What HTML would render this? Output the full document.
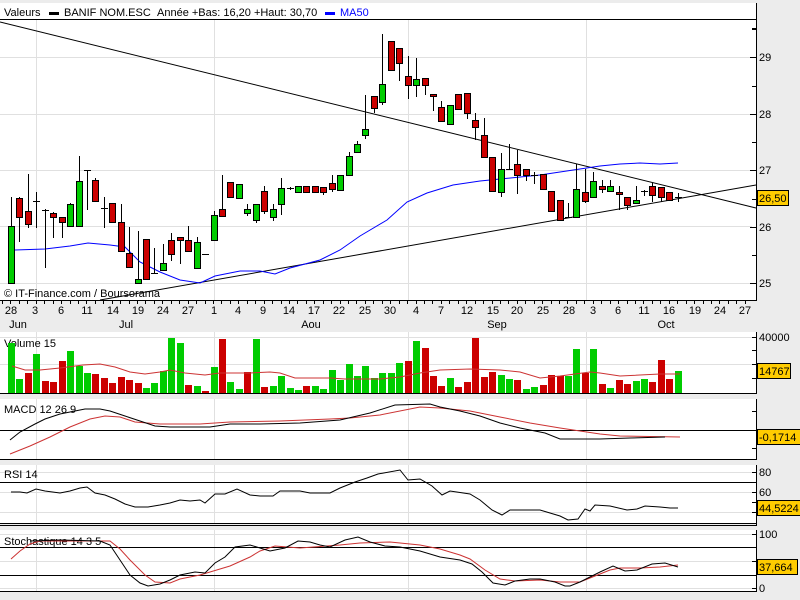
<!DOCTYPE html>
<html><head><meta charset="utf-8">
<style>
html,body{margin:0;padding:0;background:#ececec;width:800px;height:600px;overflow:hidden}
svg{display:block}
text{font-family:"Liberation Sans",Arial,sans-serif;font-size:11px;fill:#000}
</style></head>
<body>
<svg id="s" width="800" height="600" xmlns="http://www.w3.org/2000/svg" shape-rendering="crispEdges">
<rect x="0" y="0" width="800" height="600" fill="#ececec"/>
<!-- panels -->
<rect x="0" y="3" width="756" height="297" fill="#fff"/>
<rect x="0" y="332" width="756" height="61" fill="#fff"/>
<rect x="0" y="399" width="756" height="60" fill="#fff"/>
<rect x="0" y="465" width="756" height="59" fill="#fff"/>
<rect x="0" y="530" width="756" height="61" fill="#fff"/>
<g id="grid" stroke="#e0e0e0" stroke-width="1"></g>
<g id="main"></g>
<!-- header -->
<text x="4" y="16">Valeurs</text>
<rect x="49" y="12" width="10" height="3" fill="#000"/>
<text x="64" y="16">BANIF NOM.ESC</text>
<text x="157" y="16">Année +Bas: 16,20 +Haut: 30,70</text>
<rect x="325" y="12" width="10" height="3" fill="#0000ff"/>
<text x="340" y="16" style="fill:#0000ff">MA50</text>
<line x1="0" y1="19.5" x2="756" y2="19.5" stroke="#000"/>
<text x="4" y="297" style="font-size:11px">© IT-Finance.com / Boursorama</text>
<!-- titles -->
<text x="4" y="347">Volume 15</text>
<text x="4" y="413">MACD 12 26 9</text>
<text x="4" y="478">RSI 14</text>
<text x="4" y="545">Stochastique 14 3 5</text>
<!-- right labels -->
<g id="rl"></g>
</svg>
<script>
var NS="http://www.w3.org/2000/svg",s=document.getElementById('s');
function el(t,a,p){var e=document.createElementNS(NS,t);for(var k in a)e.setAttribute(k,a[k]);(p||s).appendChild(e);return e;}
function txt(x,y,t,a){var e=el('text',Object.assign({x:x,y:y},a||{}));e.textContent=t;return e;}
function pl(pts,c,w){el('polyline',{points:pts.map(function(p){return p.join(',')}).join(' '),fill:'none',stroke:c,'stroke-width':w||1,'shape-rendering':'auto'});}
var g=document.getElementById('grid');
// horizontal grids main
[57,114,170,226,283].forEach(function(y){el('line',{x1:0,y1:y+.5,x2:752,y2:y+.5},g);});
[337,364].forEach(function(y){el('line',{x1:0,y1:y+.5,x2:752,y2:y+.5},g);});
[472,492,512].forEach(function(y){el('line',{x1:0,y1:y+.5,x2:752,y2:y+.5},g);});
[534,561,588].forEach(function(y){el('line',{x1:0,y1:y+.5,x2:752,y2:y+.5},g);});
[[20,300],[332,393],[399,459],[465,523],[530,591]].forEach(function(r){[36,214,408,586].forEach(function(x){el('line',{x1:x+.5,y1:r[0],x2:x+.5,y2:r[1]},g);});});
// black reference lines
function bl(y,x2){el('line',{x1:0,y1:y+.5,x2:x2||756,y2:y+.5,stroke:'#000'});}
bl(430);bl(482);bl(547);bl(575);
// borders
bl(300);bl(393);bl(459);bl(523);bl(525);bl(591);
[[3,300],[332,393],[399,459],[465,525],[530,591]].forEach(function(r){el('line',{x1:756.5,y1:r[0],x2:756.5,y2:r[1]+1,stroke:'#000'});});
// right ticks
[29,28,27,26,25].forEach(function(v,i){var y=57+i*56.5;el('line',{x1:750,y1:Math.round(y)+.5,x2:756,y2:Math.round(y)+.5,stroke:'#000'});el('line',{x1:752,y1:Math.round(y-28)+.5,x2:756,y2:Math.round(y-28)+.5,stroke:'#000'});txt(759,Math.round(y)+4,String(v));});
el('line',{x1:752,y1:28.5,x2:756,y2:28.5,stroke:'#000'});
[[337,'40000'],[350],[364],[378]].forEach(function(a){el('line',{x1:752,y1:a[0]+.5,x2:756,y2:a[0]+.5,stroke:'#000'});if(a[1])txt(759,a[0]+4,a[1]);});
[411,448].forEach(function(y){el('line',{x1:752,y1:y+.5,x2:756,y2:y+.5,stroke:'#000'});});
[[472,'80'],[492,'60'],[502],[512]].forEach(function(a){el('line',{x1:752,y1:a[0]+.5,x2:756,y2:a[0]+.5,stroke:'#000'});if(a[1])txt(759,a[0]+4,a[1]);});
[[534,'100'],[561],[588,'0']].forEach(function(a){el('line',{x1:752,y1:a[0]+.5,x2:756,y2:a[0]+.5,stroke:'#000'});if(a[1])txt(759,a[0]+4,a[1]);});
// x axis ticks and labels
for(var i=0;i<89;i++){var x=Math.round(2+i*8.44)+.5;el('line',{x1:x,y1:300,x2:x,y2:304,stroke:'#000'});}
var dl=[[11,'28'],[35,'3'],[61,'6'],[87,'11'],[113,'14'],[138,'19'],[163,'24'],[188,'27'],[214,'1'],[238,'4'],[263,'9'],[289,'14'],[314,'17'],[339,'22'],[365,'25'],[390,'30'],[416,'4'],[441,'7'],[467,'12'],[493,'15'],[517,'20'],[543,'25'],[569,'28'],[593,'3'],[618,'6'],[644,'11'],[669,'16'],[695,'19'],[720,'24'],[745,'27']];
dl.forEach(function(d){txt(d[0],314,d[1],{'text-anchor':'middle'});});
[[18,'Jun'],[126,'Jul'],[311,'Aou'],[497,'Sep'],[666,'Oct']].forEach(function(d){txt(d[0],328,d[1],{'text-anchor':'middle'});});
// trend lines
el('line',{x1:0,y1:22,x2:756,y2:208,stroke:'#000','shape-rendering':'auto'});
el('line',{x1:100,y1:300,x2:756,y2:185,stroke:'#000','shape-rendering':'auto'});
// MA50
pl([[15,250],[45,249],[70,246],[88,243],[110,245],[125,247],[140,262],[150,267],[160,272],[180,280],[200,283],[215,276],[240,271],[260,271],[275,274],[290,268],[320,260],[340,250],[360,236],[387,220],[407,202],[427,193],[453,185],[480,181],[500,179],[540,175],[580,169],[600,166],[620,164],[640,163],[660,164],[678,163]],'#0000ff');
// candles
var C=[[226,283,197,283,'g'],[198,217,197,241,'r'],[211,224,174,227,'r'],[201,201,192,227,'c'],[210,210,209,267,'c'],[213,217,212,237,'r'],[217,222,217,237,'r'],[204,226,203,226,'g'],[181,226,156,226,'g'],[170,170,170,209,'c'],[180,201,178,201,'r'],[208,208,197,227,'c'],[203,222,203,222,'r'],[222,251,204,251,'r'],[253,267,227,267,'r'],[279,283,231,283,'g'],[239,279,239,279,'r'],[273,273,248,273,'c'],[263,270,244,270,'g'],[240,254,233,260,'r'],[237,240,237,263,'r'],[240,251,226,251,'r'],[242,268,237,268,'g'],[254,254,254,254,'c'],[215,240,211,240,'g'],[209,216,175,216,'r'],[182,197,182,197,'r'],[184,198,184,198,'g'],
[209,213,204,215,'g'],[204,220,204,222,'g'],[191,211,186,213,'r'],[209,217,204,220,'g'],[188,204,178,214,'g'],[188,188,187,189,'c'],[186,192,186,192,'g'],[186,192,186,192,'r'],[186,192,186,192,'r'],[187,192,187,194,'r'],[183,189,175,191,'r'],[175,190,175,190,'g'],[156,175,152,175,'g'],[144,152,141,152,'g'],[129,135,95,138,'g'],[96,108,96,112,'r'],[84,102,34,104,'g'],[41,70,41,70,'r'],[48,63,48,80,'r'],[76,85,56,98,'r'],[79,85,58,96,'g'],[78,85,78,94,'r'],[94,96,94,110,'r'],[107,121,101,121,'r'],[105,124,105,124,'g'],[94,109,94,109,'r'],[93,113,93,118,'r'],[120,127,113,139,'r'],
[135,157,118,157,'r'],[157,191,157,191,'r'],[169,192,153,196,'g'],[169,169,144,169,'c'],[164,175,150,193,'r'],[169,175,169,180,'r'],[175,175,172,183,'c'],[174,189,174,189,'r'],[191,211,191,211,'r'],[200,220,200,220,'r'],[217,217,203,217,'c'],[189,217,164,217,'g'],[192,201,169,202,'r'],[181,197,172,197,'g'],[186,189,180,192,'r'],[186,191,180,191,'g'],[192,194,186,209,'r'],[197,205,197,209,'r'],[200,203,186,203,'g'],[191,191,190,195,'c'],[186,195,183,201,'r'],[187,197,187,201,'r'],[192,200,192,200,'r'],[197,197,193,201,'c']];
C.forEach(function(c,i){var x=Math.round(11+i*8.44);
 el('line',{x1:x+.5,y1:c[2],x2:x+.5,y2:c[3]+1,stroke:'#000'});
 if(c[4]=='c'){el('line',{x1:x-3,y1:c[0]+.5,x2:x+4,y2:c[0]+.5,stroke:'#000'});}
 else el('rect',{x:x-2.5,y:c[0]+.5,width:6,height:Math.max(c[1]-c[0],2),fill:c[4]=='g'?'#00cc00':'#cc0000',stroke:'#000'});
});
// volume
var V=[[343,'g'],[379,'g'],[373,'r'],[354,'g'],[381,'r'],[382,'r'],[361,'r'],[351,'g'],[366,'g'],[373,'g'],[374,'r'],[378,'r'],[383,'r'],[377,'r'],[380,'r'],[383,'r'],[388,'g'],[383,'g'],[371,'g'],[338,'g'],[343,'g'],[385,'r'],[386,'g'],[391,'r'],[367,'g'],[339,'r'],[382,'g'],[389,'g'],[372,'r'],[339,'g'],[387,'r'],[386,'g'],[376,'g'],[388,'g'],[390,'g'],[386,'r'],[386,'g'],[389,'g'],[370,'g'],[380,'g'],[364,'g'],[376,'g'],[366,'g'],[378,'g'],[373,'g'],[373,'g'],[363,'g'],
[361,'r'],[341,'g'],[348,'r'],[376,'r'],[386,'r'],[378,'g'],[387,'r'],[382,'r'],[338,'r'],[377,'r'],[372,'r'],[375,'g'],[379,'g'],[380,'r'],[389,'g'],[387,'g'],[385,'r'],[375,'r'],[376,'r'],[376,'g'],[349,'g'],[373,'r'],[349,'g'],[384,'r'],[388,'g'],[380,'r'],[384,'r'],[381,'g'],[379,'g'],[382,'r'],[360,'r'],[379,'r'],[371,'g']];
V.forEach(function(v,i){var x=Math.round(11+i*8.44);el('rect',{x:x-3,y:v[0],width:7,height:393-v[0],fill:v[1]=='g'?'#00cc00':'#cc0000'});});
pl([[12,366],[25,370],[40,370],[60,368],[83,365],[100,364],[115,367],[130,372],[145,374],[160,372],[170,370],[185,373],[205,375],[220,373],[250,373],[270,372],[280,373],[295,378],[310,378],[330,378],[345,379],[360,379],[380,379],[400,377],[420,373],[440,370],[470,369],[500,370],[520,372],[540,378],[560,376],[575,374],[590,372],[600,373],[620,376],[660,374],[680,374]],'#cc3333');
// MACD
pl([[10,454],[30,446],[50,437],[70,427],[90,419],[105,416],[120,417],[135,422],[160,424],[200,424],[230,422],[280,421],[330,419],[350,418],[380,415],[420,407],[440,408],[470,411],[500,417],[530,423],[560,428],[580,431],[600,434],[620,436],[680,437]],'#cc3333');
pl([[10,440],[20,432],[35,424],[45,419],[60,414],[75,411],[85,409],[100,409],[110,411],[125,416],[140,421],[155,426],[170,427],[210,427],[230,424],[260,424],[300,423],[340,420],[370,413],[395,405],[430,404],[440,407],[460,411],[480,416],[500,423],[520,428],[545,433],[560,439],[600,439],[630,438],[665,437]],'#000');
// RSI
pl([[11,492],[20,492],[27,493],[36,489],[45,491],[60,493],[70,491],[80,488],[87,487],[95,493],[105,495],[115,499],[125,504],[135,507],[148,507],[160,505],[170,503],[180,500],[190,501],[200,500],[205,503],[215,494],[225,494],[237,489],[250,495],[260,496],[273,496],[280,491],[300,491],[310,493],[330,493],[340,488],[355,482],[367,478],[378,474],[400,470],[408,480],[420,479],[432,486],[442,495],[450,491],[470,494],[480,500],[492,510],[502,515],[510,510],[540,510],[550,513],[560,516],[568,520],[578,519],[585,509],[590,511],[595,505],[610,506],[627,510],[637,509],[645,506],[660,507],[670,508],[678,508]],'#000');
// Stoch
pl([[11,559],[20,551],[30,544],[40,541],[100,541],[110,541],[120,549],[130,560],[145,575],[155,582],[170,583],[180,579],[200,575],[210,572],[230,566],[250,557],[260,551],[275,546],[300,548],[340,545],[360,543],[390,542],[420,545],[440,549],[460,555],[470,559],[485,570],[500,579],[515,581],[540,580],[560,582],[580,582],[595,576],[610,570],[620,568],[640,568],[660,567],[678,565]],'#cc3333');
pl([[30,541],[60,540],[100,541],[110,545],[120,560],[130,575],[140,583],[148,586],[160,584],[170,580],[180,575],[195,572],[205,573],[215,563],[225,557],[235,547],[250,545],[260,548],[270,551],[285,548],[298,541],[310,542],[320,545],[330,547],[345,540],[358,537],[370,542],[385,546],[400,547],[420,551],[440,557],[460,560],[472,564],[482,572],[493,583],[505,585],[515,581],[530,579],[540,579],[555,582],[565,586],[570,586],[580,582],[590,577],[600,572],[613,566],[625,571],[637,570],[652,564],[665,563],[678,567]],'#000');
// yellow value boxes
[[190,'26,50',31],[363,'14767',33],[429,'-0,1714',43],[500,'44,5224',43],[559,'37,664',40]].forEach(function(b){el('rect',{x:757.5,y:b[0]+.5,width:b[2],height:15,fill:'#ffcc00',stroke:'#000'});txt(759,b[0]+12,b[1]);});
</script>
</body></html>
